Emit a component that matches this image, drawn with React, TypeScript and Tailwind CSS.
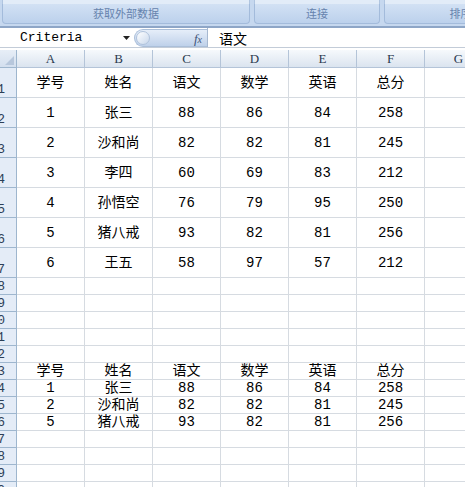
import React from 'react';

const COLS = ['A', 'B', 'C', 'D', 'E', 'F', 'G'];

const HEAD = ['学号', '姓名', '语文', '数学', '英语', '总分'];

const TOP_ROWS: string[][] = [
  HEAD,
  ['1', '张三', '88', '86', '84', '258'],
  ['2', '沙和尚', '82', '82', '81', '245'],
  ['3', '李四', '60', '69', '83', '212'],
  ['4', '孙悟空', '76', '79', '95', '250'],
  ['5', '猪八戒', '93', '82', '81', '256'],
  ['6', '王五', '58', '97', '57', '212'],
];

const RESULT_ROWS: string[][] = [
  HEAD,
  ['1', '张三', '88', '86', '84', '258'],
  ['2', '沙和尚', '82', '82', '81', '245'],
  ['5', '猪八戒', '93', '82', '81', '256'],
];

const cellFont = { fontFamily: '"Liberation Mono", "Noto Sans CJK SC", monospace' };

function buildRows() {
  const rows: { n: number; h: string; cells: string[]; tall: boolean }[] = [];
  for (let i = 1; i <= 20; i++) {
    let cells: string[] = [];
    if (i <= 7) cells = TOP_ROWS[i - 1];
    if (i >= 13 && i <= 16) cells = RESULT_ROWS[i - 13];
    rows.push({ n: i, h: i <= 7 ? 'h-[30px]' : 'h-[17px]', cells, tall: i <= 7 });
  }
  return rows;
}

const Ribbon: React.FC = () => (
  <div className="h-[28px] shrink-0 bg-[#c6d8ef] border-b-2 border-[#8ea6c7] flex overflow-hidden">
    {[
      { label: '获取外部数据', w: 'w-[252px]' },
      { label: '连接', w: 'w-[130px]' },
      { label: '排序和筛选', w: 'w-[190px]' },
    ].map((g) => (
      <div key={g.label} className={`${g.w} shrink-0 h-[24px] flex flex-col overflow-hidden`}>
        <div className="h-[4px] shrink-0 mx-[2px] bg-[#e2ecf8] border-x border-[#b0c5e0]" />
        <div className="flex-1 mx-[2px] rounded-b-[4px] border-x border-b border-[#a3bbdb] bg-gradient-to-b from-[#d2e1f4] to-[#bcd1ec] flex items-center justify-center overflow-hidden">
          <span
            className="text-[11px] leading-none text-[#6683ad] whitespace-nowrap"
            style={{ fontFamily: '"Noto Sans CJK SC", sans-serif' }}
          >
            {g.label}
          </span>
        </div>
      </div>
    ))}
  </div>
);

const FormulaBar: React.FC = () => (
  <div className="h-[20px] shrink-0 flex border-b border-[#c3ccd8] bg-white">
    <div className="w-[134px] flex items-center relative">
      <span className="pl-[20px] text-[13px] leading-none text-black" style={{ fontFamily: '"Liberation Mono", monospace' }}>
        Criteria
      </span>
      <svg className="absolute left-[123px] top-[8px]" width="7" height="4" viewBox="0 0 7 4">
        <path d="M0 0h7L3.5 4z" fill="#222" />
      </svg>
    </div>
    <div className="w-[73px] h-[18px] mt-[1px] rounded-l-full border border-r-0 border-[#abbfd9] bg-gradient-to-b from-[#e6eef9] to-[#bfd1ea] flex items-center justify-between">
      <div className="w-[14px] h-[14px] ml-[1px] rounded-full border border-[#b0c3dc] bg-gradient-to-br from-white to-[#c9d8ec]" />
      <span
        className="pr-[5px] text-[13px] italic leading-none text-[#3f5478]"
        style={{ fontFamily: '"Liberation Serif", serif' }}
      >
        f<span className="text-[10px]">x</span>
      </span>
    </div>
    <div className="w-[1px] bg-[#a6b8d0]" />
    <div className="flex-1 flex items-center pl-[11px]">
      <span className="text-[14px] leading-none text-black" style={{ fontFamily: '"Noto Sans CJK SC", sans-serif' }}>
        语文
      </span>
    </div>
  </div>
);

const HeaderRow: React.FC = () => (
  <div className="flex h-[18px] shrink-0">
    <div className="w-[17px] shrink-0 h-full bg-gradient-to-b from-[#e7eef7] to-[#d3dfee] border-r border-b border-[#9eb6ce] relative">
      <svg className="absolute right-[2px] bottom-[2px]" width="9" height="9" viewBox="0 0 9 9">
        <path d="M9 0v9H0z" fill="#b7c7dc" />
      </svg>
    </div>
    {COLS.map((c) => (
      <div
        key={c}
        className="w-[68px] shrink-0 h-full bg-gradient-to-b from-[#f6f9fc] to-[#dbe4ef] border-r border-b border-[#b4c4d8] flex items-center justify-center"
      >
        <span className="text-[13px] leading-none text-[#2a3a4f]" style={{ fontFamily: '"Liberation Serif", serif' }}>
          {c}
        </span>
      </div>
    ))}
  </div>
);

const App: React.FC = () => {
  const rows = buildRows();
  return (
    <div className="w-[465px] h-[487px] overflow-hidden bg-white flex flex-col">
      <Ribbon />
      <FormulaBar />
      <div className="h-[2px] bg-white shrink-0" />
      <HeaderRow />
      {rows.map((r) => (
        <div key={r.n} className={`flex shrink-0 ${r.h}`}>
          <div className="w-[17px] shrink-0 h-full bg-[#e4ecf7] border-r border-b border-[#9eb6ce] flex items-end justify-end overflow-hidden pr-[11px]">
            <span className="text-[13px] leading-[15px] text-[#2d3f57] whitespace-nowrap" style={{ fontFamily: '"Liberation Mono", monospace' }}>
              {r.n}
            </span>
          </div>
          {COLS.map((c, ci) => (
            <div
              key={c}
              className={`w-[68px] shrink-0 h-full border-r border-b border-[#d6dbe1] flex justify-center ${
                r.tall ? 'items-center' : 'items-end'
              }`}
            >
              <span className="text-[14px] leading-[16px] text-black whitespace-nowrap" style={cellFont}>
                {r.cells[ci] ?? ''}
              </span>
            </div>
          ))}
        </div>
      ))}
    </div>
  );
};

export default App;
